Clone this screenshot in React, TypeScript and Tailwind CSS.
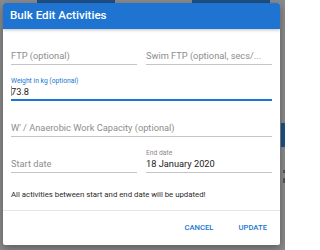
import React from 'react';

interface FieldProps {
  label?: string;
  value?: string;
  placeholder?: string;
  focused?: boolean;
}

const Field: React.FC<FieldProps> = ({ label, value, placeholder, focused }) => {
  return (
    <div className="flex flex-col min-w-0">
      <div
        className={`h-[9px] text-[6.75px] leading-[9px] ${focused ? 'text-[#1976d2]' : 'text-[#8a8a8a]'}`}
      >
        {label}
      </div>
      <div
        className={`flex items-center pb-[2px] text-[9.25px] ${
          focused ? 'h-[15px] border-b-2 border-[#1976d2]' : 'h-[15px] border-b border-[#c4c4c4]'
        }`}
      >
        {value ? (
          <span className="relative text-[#222]">
            {focused && <span className="absolute left-[-0.5px] top-[1px] h-[10px] w-px bg-[#9a9a9a]" />}
            {value}
          </span>
        ) : (
          <span className="whitespace-nowrap text-[#8d8d8d]">{placeholder}</span>
        )}
      </div>
    </div>
  );
};

export default function App() {
  return (
    <div
      className="relative h-[250px] w-[285px] overflow-hidden bg-[#8a8a8a] pl-[3px] pt-[3px]"
      style={{ fontFamily: 'Roboto, "Liberation Sans", sans-serif' }}
    >
      {/* page behind the overlay */}
      <div className="absolute left-[37px] top-0 h-[3px] w-[78px] bg-[#1f4f86]" />
      <div className="absolute left-[192px] top-0 h-[3px] w-[78px] bg-[#1f4f86]" />
      <div className="absolute left-[281px] top-[123px] h-[24px] w-[4px] bg-[#1f4f86]" />
      <div className="absolute left-[283px] top-[170px] h-[3px] w-[2px] bg-[#555]" />
      <div className="absolute left-[283px] top-[178px] h-[5px] w-[2px] bg-[#555]" />

      {/* dialog */}
      <div className="relative flex h-[242px] w-[277px] flex-col overflow-hidden rounded-[2px] bg-white shadow-[0_3px_8px_rgba(0,0,0,0.35)]">
        <div className="flex h-[26px] items-center bg-[#1e74d0] px-[7px] text-[11.6px] font-medium text-white shadow-[0_1px_3px_rgba(0,0,0,0.25)]">
          Bulk Edit Activities
        </div>

        <div className="flex flex-col gap-[12px] px-[8px] pt-[12px]">
          <div className="grid grid-cols-2 gap-[9px]">
            <Field placeholder="FTP (optional)" />
            <Field placeholder="Swim FTP (optional, secs/..." />
          </div>
          <Field label="Weight in kg (optional)" value="73.8" focused />
          <Field placeholder="W' / Anaerobic Work Capacity (optional)" />
          <div className="grid grid-cols-2 gap-[9px]">
            <Field placeholder="Start date" />
            <Field label="End date" value="18 January 2020" />
          </div>
        </div>

        <p className="px-[8px] pt-[17px] text-[7.8px] leading-[10px] text-[#2a2a2a]">
          All activities between start and end date will be updated!
        </p>

        <div className="mt-[10px] border-t border-[#e6e6e6]" />

        <div className="flex flex-1 items-center justify-end gap-[25px] pr-[13px]">
          <button className="text-[7.7px] font-medium text-[#1976d2]">CANCEL</button>
          <button className="text-[7.7px] font-medium text-[#1976d2]">UPDATE</button>
        </div>
      </div>
    </div>
  );
}
